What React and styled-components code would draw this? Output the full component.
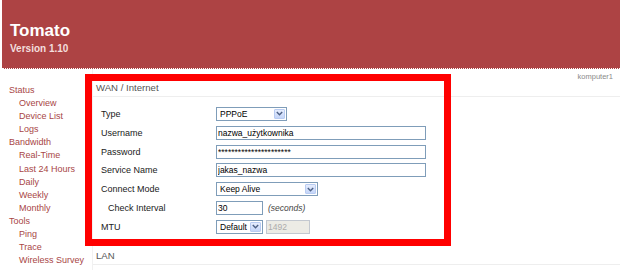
import styled, { createGlobalStyle } from 'styled-components'

const GlobalStyle = createGlobalStyle`
  html, body {
    margin: 0;
    padding: 0;
    background: #fff;
  }
  body {
    font-family: "Liberation Sans", Arial, sans-serif;
  }
`

const menu = [
  { label: 'Status' },
  { label: 'Overview', sub: true },
  { label: 'Device List', sub: true },
  { label: 'Logs', sub: true },
  { label: 'Bandwidth' },
  { label: 'Real-Time', sub: true },
  { label: 'Last 24 Hours', sub: true },
  { label: 'Daily', sub: true },
  { label: 'Weekly', sub: true },
  { label: 'Monthly', sub: true },
  { label: 'Tools' },
  { label: 'Ping', sub: true },
  { label: 'Trace', sub: true },
  { label: 'Wireless Survey', sub: true },
]

const ChevronDown = () => (
  <svg width="7" height="5" viewBox="0 0 7 5">
    <path d="M0.8 1 L3.5 3.8 L6.2 1" fill="none" stroke="#4d6185" strokeWidth="1.4" />
  </svg>
)

const Select = ({ w, children }) => (
  <SelectBox $w={w}>
    <SelectText>{children}</SelectText>
    <Arrow><ChevronDown /></Arrow>
  </SelectBox>
)

const App = () => {
  return (
    <Page>
      <GlobalStyle />
      <Header>
        <Title>Tomato</Title>
        <Version>Version 1.10</Version>
      </Header>
      <Body>
        <Sidebar>
          {menu.map(m => (
            <MenuLink key={m.label} $sub={m.sub}>{m.label}</MenuLink>
          ))}
        </Sidebar>
        <Content>
          <Host>komputer1</Host>
          <Section>
            <SectionTitle>WAN / Internet</SectionTitle>
            <Form>
              <Row>
                <Label>Type</Label>
                <Select w={71}>PPPoE</Select>
              </Row>
              <Row>
                <Label>Username</Label>
                <TextInput $w={210} defaultValue="nazwa_użytkownika" />
              </Row>
              <Row>
                <Label>Password</Label>
                <TextInput $w={210} defaultValue="**********************" />
              </Row>
              <Row>
                <Label>Service Name</Label>
                <TextInput $w={210} defaultValue="jakas_nazwa" />
              </Row>
              <Row>
                <Label>Connect Mode</Label>
                <Select w={102}>Keep Alive</Select>
              </Row>
              <Row>
                <Label $indent>Check Interval</Label>
                <Field>
                  <TextInput $w={47} defaultValue="30" />
                  <Hint>(seconds)</Hint>
                </Field>
              </Row>
              <Row>
                <Label>MTU</Label>
                <Field>
                  <Select w={47}>Default</Select>
                  <TextInput $w={44} $disabled disabled defaultValue="1492" />
                </Field>
              </Row>
            </Form>
            <Highlight />
          </Section>
          <NextSection>
            <SectionTitle>LAN</SectionTitle>
          </NextSection>
        </Content>
      </Body>
    </Page>
  )
}

const Page = styled.div`
width: 620px;
height: 270px;
overflow: hidden;
box-sizing: border-box;
padding-left: 2px;`

const Header = styled.div`
box-sizing: border-box;
height: 69px;
padding: 21px 0 0 8px;
background: #ad4344;
border-bottom: 1px dotted #fff;`

const Title = styled.div`
font-size: 17px;
line-height: 20px;
font-weight: bold;
color: #fff;`

const Version = styled.div`
margin-top: 2px;
font-size: 10px;
line-height: 12px;
font-weight: bold;
color: #f3dede;`

const Body = styled.div`
display: grid;
grid-template-columns: 90px 1fr;
height: 201px;`

const Sidebar = styled.div`
padding: 15px 0 0 7px;
display: flex;
flex-direction: column;`

const MenuLink = styled.a`
font-size: 9px;
line-height: 13.1px;
color: #a84646;
white-space: nowrap;
padding-left: ${props => props.$sub ? '10px' : '0'};
cursor: pointer;`

const Content = styled.div`
border-left: 1px solid #f1f1f1;
padding-top: 3px;`

const Host = styled.div`
height: 10px;
line-height: 10px;
font-size: 7.5px;
color: #8a8a8a;
text-align: right;
padding-right: 7px;`

const Section = styled.div`
position: relative;`

const NextSection = styled.div`
margin-top: 14px;`

const SectionTitle = styled.div`
font-size: 9.6px;
line-height: 12px;
color: #555;
padding: 0 0 2px 3px;
border-bottom: 1px solid #eeeeee;`

const Form = styled.div`
margin-top: 7.6px;
padding-left: 8px;
display: flex;
flex-direction: column;`

const Row = styled.div`
display: grid;
grid-template-columns: 115px auto;
align-items: center;
height: 18.8px;`

const Label = styled.div`
font-size: 9px;
color: #1a1a1a;
padding-left: ${props => props.$indent ? '7px' : '0'};`

const Field = styled.div`
display: flex;
align-items: center;
gap: 3px;`

const TextInput = styled.input`
box-sizing: border-box;
width: ${props => props.$w}px;
height: 14px;
margin: 0;
padding: 0 1px;
border: 1px solid ${props => props.$disabled ? '#c3c8d0' : '#7f9db9'};
background: ${props => props.$disabled ? '#ecebe5' : '#fff'};
color: ${props => props.$disabled ? '#acacac' : '#000'};
font-family: "Liberation Sans", Arial, sans-serif;
font-size: 8.5px;
outline: none;`

const Hint = styled.span`
margin-left: 2px;
font-size: 8.5px;
font-style: italic;
color: #444;`

const SelectBox = styled.div`
box-sizing: border-box;
display: flex;
align-items: stretch;
width: ${props => props.$w}px;
height: 14px;
padding: 1px;
border: 1px solid #7f9db9;
background: #fff;
font-size: 8.5px;
color: #000;`

const SelectText = styled.span`
flex: 1;
padding-left: 2px;
line-height: 10px;
white-space: nowrap;
overflow: hidden;`

const Arrow = styled.span`
box-sizing: border-box;
width: 11px;
display: flex;
align-items: center;
justify-content: center;
border: 1px solid #b9ccf2;
border-radius: 1px;
background: linear-gradient(#e6edfd, #c4d5f8);`

const Highlight = styled.div`
position: absolute;
left: -8px;
top: -8px;
width: 366px;
height: 172px;
box-sizing: border-box;
border: 7px solid #ff0000;
pointer-events: none;`

export default App
